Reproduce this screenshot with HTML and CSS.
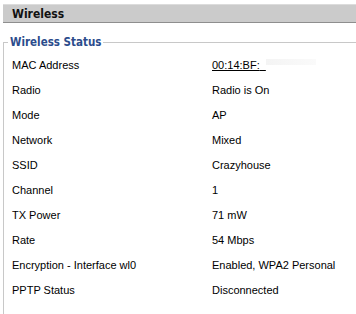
FILE: index.html
```html
<!DOCTYPE html>
<html lang="en">

<head>
    <meta charset="UTF-8">
    <title>Wireless</title>
    <link rel="stylesheet" href="styles.css">
</head>

<body>
    <div class="section-head">
        <h2>Wireless</h2>
    </div>

    <fieldset class="status">
        <legend>Wireless Status</legend>
        <div class="rows">
            <div class="label">MAC Address</div>
            <div class="value"><a class="mac" href="#">00:14:BF:<span class="hidden">&nbsp;&nbsp;</span></a><span class="blur">&nbsp;</span></div>

            <div class="label">Radio</div>
            <div class="value">Radio is On</div>

            <div class="label">Mode</div>
            <div class="value">AP</div>

            <div class="label">Network</div>
            <div class="value">Mixed</div>

            <div class="label">SSID</div>
            <div class="value">Crazyhouse</div>

            <div class="label">Channel</div>
            <div class="value">1</div>

            <div class="label">TX Power</div>
            <div class="value">71 mW</div>

            <div class="label">Rate</div>
            <div class="value">54 Mbps</div>

            <div class="label">Encryption - Interface wl0</div>
            <div class="value">Enabled, WPA2 Personal</div>

            <div class="label">PPTP Status</div>
            <div class="value">Disconnected</div>
        </div>
    </fieldset>
</body>

</html>
```

FILE: styles.css
```css
body {
    margin: 0;
    padding: 0;
    background: #fff;
    font-family: 'Liberation Sans', Arial, sans-serif;
    font-size: 11px;
    color: #000;
    overflow: hidden;
}

.section-head {
    margin: 4px 0 0 3px;
    height: 17px;
    background: #cbcbcb;
    border-top: 1px solid #dcdcdc;
    border-bottom: 1px solid #8e8e8e;
}

.section-head h2 {
    margin: 0;
    padding-left: 9px;
    font-family: 'DejaVu Sans Condensed', 'DejaVu Sans', sans-serif;
    font-size: 12px;
    font-weight: bold;
    line-height: 18px;
    color: #111;
}

.status {
    margin: 12px 0 0 3px;
    padding: 0 0 12px 8px;
    border: 1px solid #c8c8c8;
    border-width: 1px 0 1px 1px;
}

.status legend {
    margin-left: -4px;
    padding: 0 2px;
    font-family: 'DejaVu Sans Condensed', 'DejaVu Sans', sans-serif;
    font-size: 11.5px;
    font-weight: bold;
    color: #2b4c8c;
}

.rows {
    display: grid;
    grid-template-columns: 200px auto;
    grid-auto-rows: 25px;
    align-items: center;
    padding-top: 3px;
}

.mac {
    color: #000;
    text-decoration: underline;
}

.blur {
    display: inline-block;
    width: 50px;
    height: 6px;
    background: linear-gradient(90deg, #f4f4f4, #fafafa);
}
```
